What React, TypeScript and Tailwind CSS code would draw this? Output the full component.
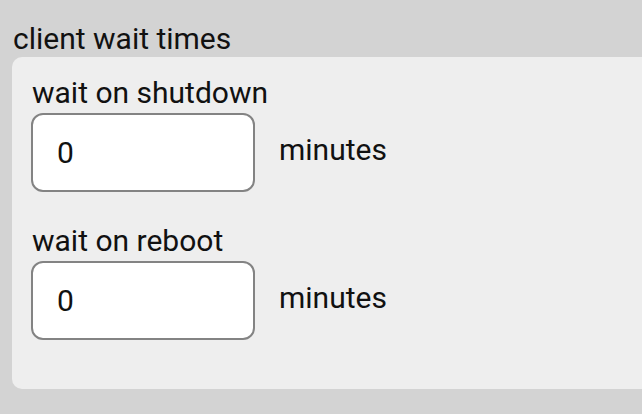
import React from 'react';

const fields = [
  { id: 'shutdown', label: 'wait on shutdown', value: '0' },
  { id: 'reboot', label: 'wait on reboot', value: '0' },
];

export default function App() {
  return (
    <div className="h-[414px] w-[642px] overflow-hidden bg-[#d3d3d3] pl-3 pt-[21px] font-['Roboto',sans-serif] text-[#111]">
      <div className="pl-px text-[30px] leading-[36px]">client wait times</div>
      <div className="flex w-[660px] flex-col gap-[31px] rounded-[10px] bg-[#eeeeee] pb-[49px] pl-[19px] pt-[18px]">
        {fields.map((f) => (
          <div key={f.id} className="flex flex-col">
            <label htmlFor={f.id} className="mb-[2px] pl-px text-[30px] leading-[36px]">
              {f.label}
            </label>
            <div className="flex items-center gap-6">
              <input
                id={f.id}
                type="text"
                defaultValue={f.value}
                className="h-[79px] w-[224px] rounded-[12px] border-2 border-[#838383] bg-white px-6 text-[30px] outline-none"
              />
              <span className="mb-[7px] text-[30px]">minutes</span>
            </div>
          </div>
        ))}
      </div>
    </div>
  );
}
